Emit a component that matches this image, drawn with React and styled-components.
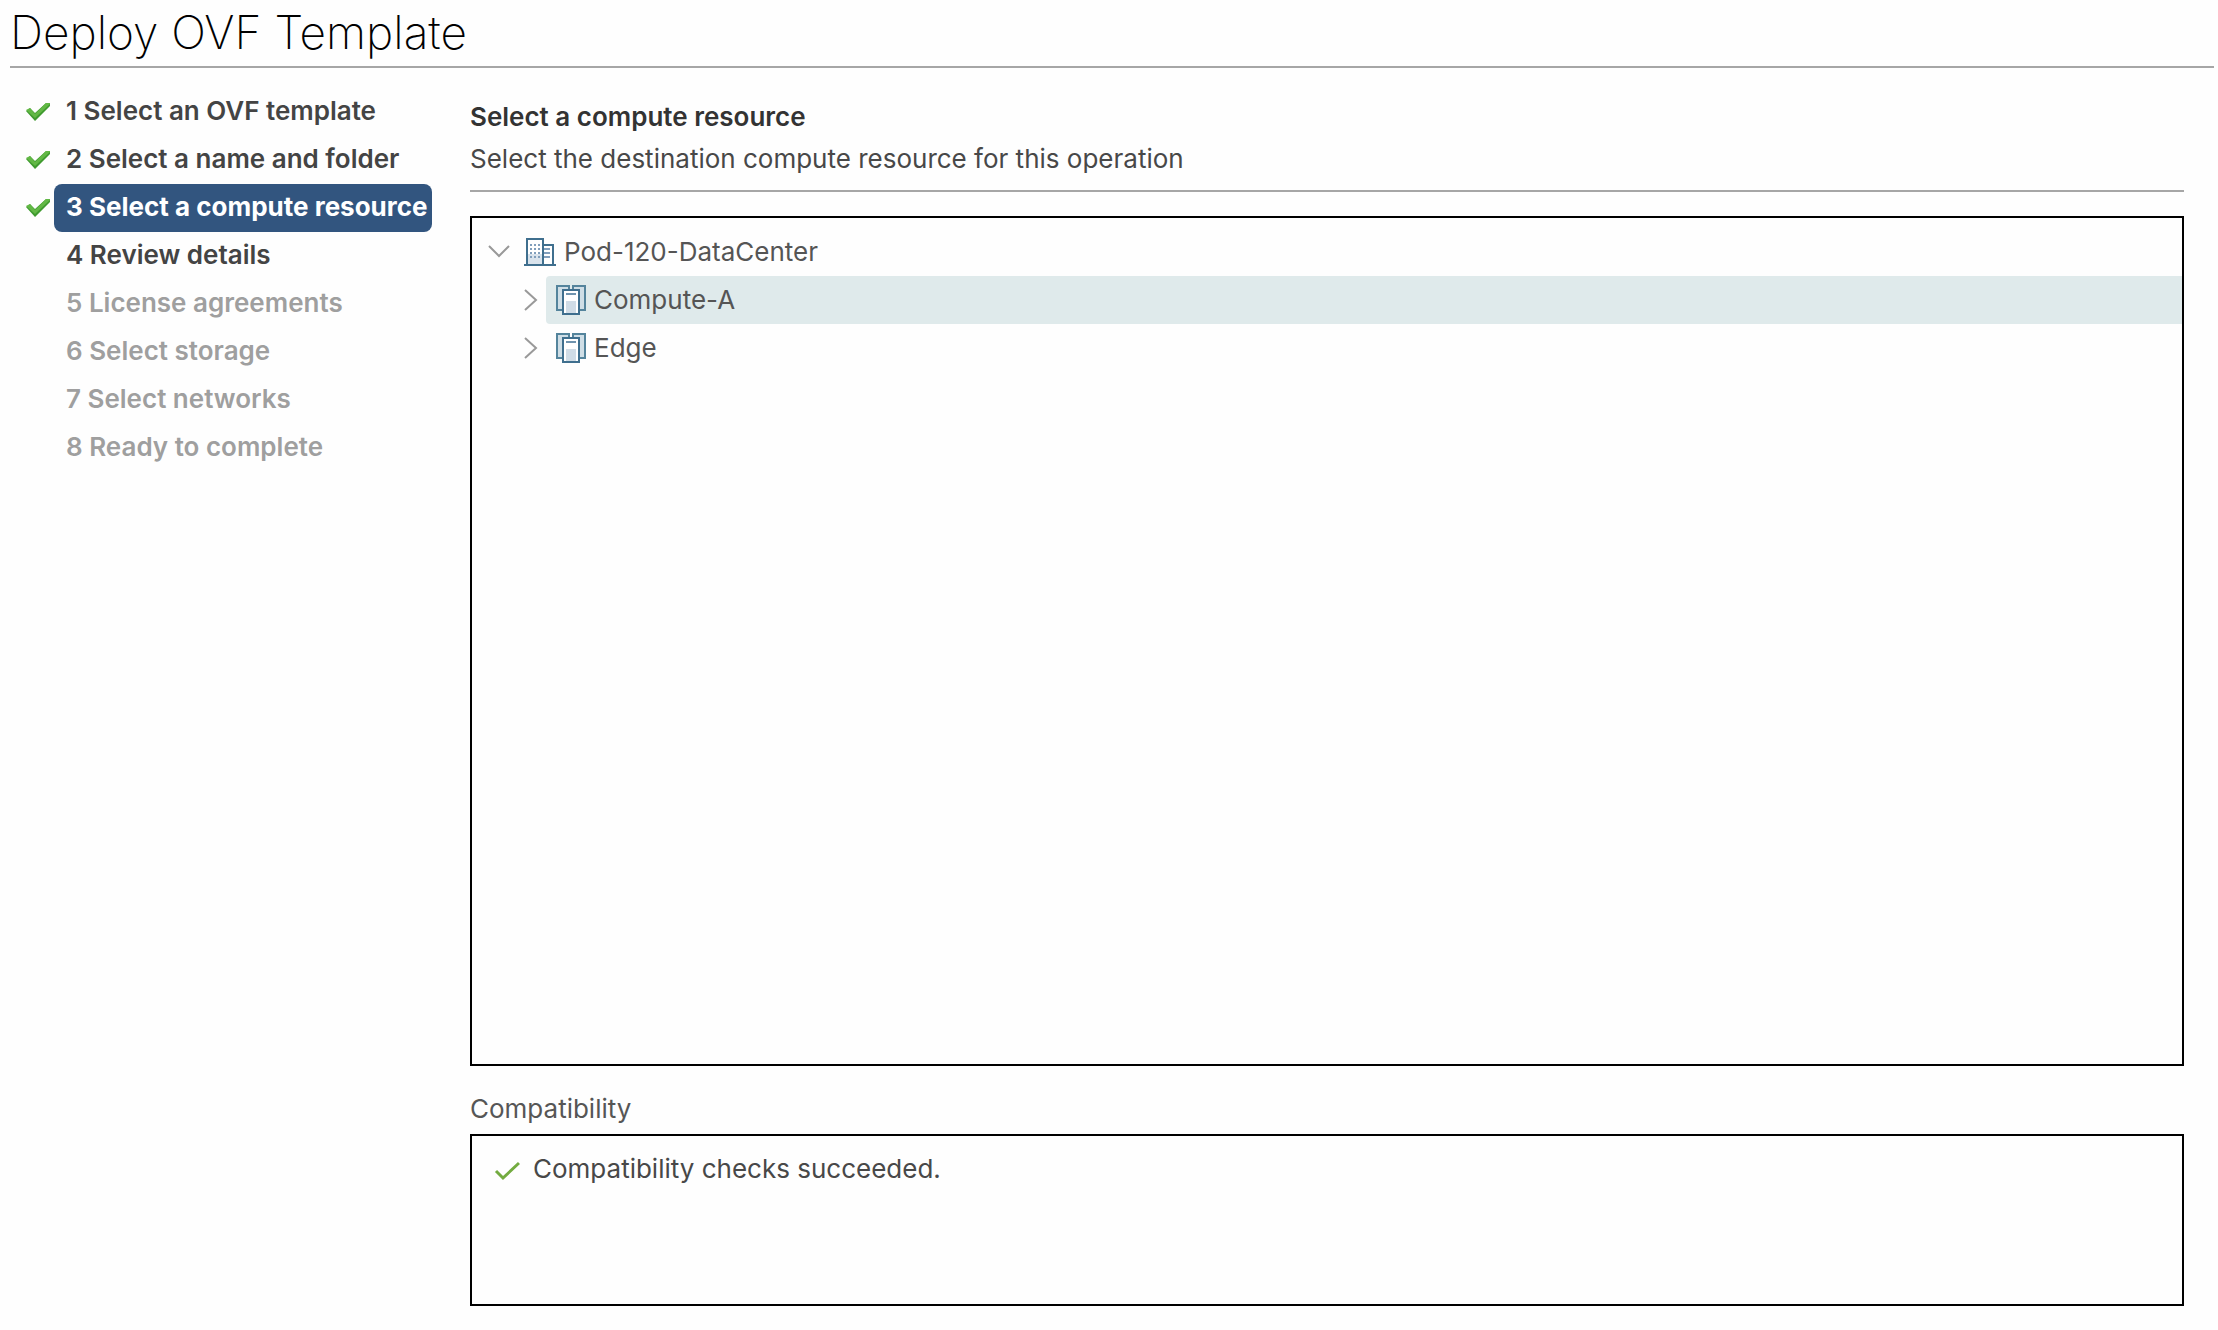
import React, { useState } from "react"
import styled, { createGlobalStyle } from "styled-components"

const GlobalStyle = createGlobalStyle`
  * {
    box-sizing: border-box;
  }

  body {
    margin: 0;
    background-color: #fefefe;
    color: #333;
    font-family: Inter, "Liberation Sans", sans-serif;
    font-size: 26px;
    line-height: 36px;
  }

  button {
    padding: 0;
    border: 0;
    background: none;
    color: inherit;
    font: inherit;
    text-align: left;
    cursor: pointer;
  }
`

const Page = styled.div`
  display: flex;
  flex-direction: column;
  min-height: 100vh;
  padding: 0 4px 24px 10px;
`

const Header = styled.header`
  height: 68px;
  border-bottom: 2px solid #a6a6a6;
`

const Title = styled.h1`
  margin: 0;
  font-size: 46px;
  font-weight: 200;
  line-height: 64px;
  color: #000;
`

const Body = styled.div`
  display: flex;
  flex: 1;
  gap: 38px;
`

const Steps = styled.ol`
  width: 422px;
  flex-shrink: 0;
  margin: 0;
  padding: 20px 0 0 16px;
  list-style: none;
`

const Step = styled.li`
  display: grid;
  grid-template-columns: 24px 1fr;
  align-items: center;
  column-gap: 4px;
`

const StepButton = styled.button`
  grid-column: 2;
  height: 48px;
  padding: 0 0 2px 12px;
  border-radius: 8px;
  white-space: nowrap;
  font-weight: ${props => (props.$active ? 700 : 600)};
  color: ${props => (props.$active ? "#fff" : "#444")};
  background-color: ${props => (props.$active ? "#32557f" : "transparent")};

  &:disabled {
    color: #9f9f9f;
    cursor: default;
  }
`

const Content = styled.main`
  display: flex;
  flex: 1;
  flex-direction: column;
  min-width: 0;
  margin-right: 30px;
`

const Intro = styled.div`
  padding: 31px 0 13px;
  border-bottom: 2px solid #a6a6a6;
`

const SectionTitle = styled.h2`
  margin: 0 0 6px;
  font-size: inherit;
  font-weight: 600;
`

const Text = styled.p`
  margin: 0;
  color: #484848;
`

const Panel = styled.div`
  border: 2px solid #000;
`

const TreePanel = styled(Panel)`
  flex: 1;
  margin-top: 24px;
  padding-top: 10px;
`

const Tree = styled.ul`
  margin: 0;
  padding: 0 0 0 ${props => (props.$nested ? 32 : 14)}px;
  list-style: none;
`

const TreeRow = styled.div`
  display: flex;
  align-items: center;
  height: 48px;
`

const Toggle = styled.button`
  display: flex;
  align-items: center;
  justify-content: center;
  width: 26px;
  height: 48px;
  flex-shrink: 0;
`

const TreeNode = styled.button`
  display: flex;
  flex: 1;
  align-items: center;
  gap: 8px;
  height: 48px;
  margin-left: 2px;
  padding-left: 10px;
  border-radius: 4px 0 0 4px;
  color: #555;
  background-color: ${props => (props.$selected ? "#dfeaeb" : "transparent")};
`

const Label = styled.h3`
  margin: 25px 0 7px;
  font-size: inherit;
  font-weight: 400;
  color: #565656;
`

const StatusPanel = styled(Panel)`
  display: flex;
  align-items: flex-start;
  gap: 13px;
  height: 172px;
  padding: 15px 22px;
`

const StatusIcon = styled.span`
  display: flex;
  align-items: center;
  height: 40px;
`

const DoneIcon = () => (
  <svg width="24" height="18" viewBox="0 0 24 18" aria-hidden="true">
    <path d="M0 8l4-3 5 5L20 0h4v3L9 18z" fill="#3f9a2f" />
    <path d="M0 7l4-2 5 6L20 0h4v1L9 15z" fill="#62b845" />
  </svg>
)

const CheckIcon = () => (
  <svg width="26" height="20" viewBox="0 0 26 20" aria-hidden="true">
    <path d="M2 10l7 7L25 2" fill="none" stroke="#73ab40" strokeWidth="3" />
  </svg>
)

const ChevronDown = () => (
  <svg width="22" height="14" viewBox="0 0 22 14" aria-hidden="true">
    <path d="M1 1l10 10L21 1" fill="none" stroke="#999" strokeWidth="2" />
  </svg>
)

const ChevronRight = () => (
  <svg width="14" height="22" viewBox="0 0 14 22" aria-hidden="true">
    <path d="M1 1l11 10L1 21" fill="none" stroke="#999" strokeWidth="2" />
  </svg>
)

const DatacenterIcon = () => (
  <svg width="32" height="28" viewBox="0 0 16 14" shapeRendering="crispEdges" aria-hidden="true">
    <path d="M2 1h7v12H2z" fill="#fff" />
    <path d="M2 8h7v5H2z" fill="#d9e3ec" />
    <path
      d="M3 3h1v1H3zM5 3h1v1H5zM7 3h1v1H7zM3 5h1v1H3zM5 5h1v1H5zM7 5h1v1H7zM3 7h1v1H3zM5 7h1v1H5zM7 7h1v1H7zM3 9h1v1H3zM5 9h1v1H5zM7 9h1v1H7zM10 5h3v1h-3zM10 7h3v1h-3zM10 9h3v1h-3z"
      fill="#819fbc"
    />
    <path d="M0 13h1V0h9v3h5v10h1v1H0zM2 1v12h7V1zM10 4v9h4V4z" fill="#3f6f8e" fillRule="evenodd" />
  </svg>
)

const ClusterIcon = () => (
  <svg width="30" height="30" viewBox="0 0 15 15" shapeRendering="crispEdges" aria-hidden="true">
    <path d="M0 0h7v13H0zM8 0h7v13H8z" fill="#54849c" />
    <path d="M1 1h5v11H1zM9 1h5v11H9z" fill="#cfdee6" />
    <path d="M3 2h9v13H3z" fill="#3f6f8e" />
    <path d="M4 3h7v11H4z" fill="#fff" />
    <path d="M5 4h5v1H5z" fill="#6f93ae" />
    <path d="M5 8h5v6H5z" fill="#d0dce6" />
  </svg>
)

const steps = [
  { name: "Select an OVF template", done: true },
  { name: "Select a name and folder", done: true },
  { name: "Select a compute resource", done: true },
  { name: "Review details" },
  { name: "License agreements", disabled: true },
  { name: "Select storage", disabled: true },
  { name: "Select networks", disabled: true },
  { name: "Ready to complete", disabled: true },
]

const clusters = ["Compute-A", "Edge"]

const App = () => {
  const [current, setCurrent] = useState(2)
  const [open, setOpen] = useState(true)
  const [selected, setSelected] = useState("Compute-A")

  return (
    <Page>
      <GlobalStyle />
      <Header>
        <Title>Deploy OVF Template</Title>
      </Header>
      <Body>
        <Steps>
          {steps.map((step, index) => (
            <Step key={step.name}>
              {step.done && <DoneIcon />}
              <StepButton
                type="button"
                $active={index === current}
                disabled={step.disabled}
                onClick={() => setCurrent(index)}
              >
                {`${index + 1} ${step.name}`}
              </StepButton>
            </Step>
          ))}
        </Steps>
        <Content>
          <Intro>
            <SectionTitle>Select a compute resource</SectionTitle>
            <Text>Select the destination compute resource for this operation</Text>
          </Intro>
          <TreePanel>
            <Tree>
              <li>
                <TreeRow>
                  <Toggle type="button" aria-label="Toggle Pod-120-DataCenter" onClick={() => setOpen(!open)}>
                    {open ? <ChevronDown /> : <ChevronRight />}
                  </Toggle>
                  <TreeNode
                    type="button"
                    $selected={selected === "Pod-120-DataCenter"}
                    onClick={() => setSelected("Pod-120-DataCenter")}
                  >
                    <DatacenterIcon />
                    Pod-120-DataCenter
                  </TreeNode>
                </TreeRow>
                {open && (
                  <Tree $nested>
                    {clusters.map(name => (
                      <li key={name}>
                        <TreeRow>
                          <Toggle type="button" aria-label={`Expand ${name}`}>
                            <ChevronRight />
                          </Toggle>
                          <TreeNode
                            type="button"
                            $selected={selected === name}
                            onClick={() => setSelected(name)}
                          >
                            <ClusterIcon />
                            {name}
                          </TreeNode>
                        </TreeRow>
                      </li>
                    ))}
                  </Tree>
                )}
              </li>
            </Tree>
          </TreePanel>
          <Label>Compatibility</Label>
          <StatusPanel role="status">
            <StatusIcon>
              <CheckIcon />
            </StatusIcon>
            <Text>Compatibility checks succeeded.</Text>
          </StatusPanel>
        </Content>
      </Body>
    </Page>
  )
}

export default App
